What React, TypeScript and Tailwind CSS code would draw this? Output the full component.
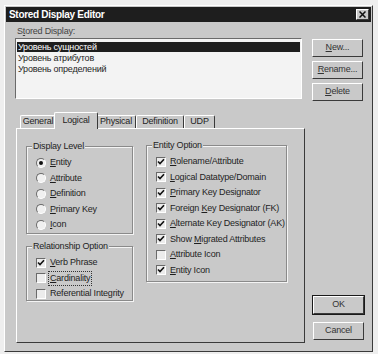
import { ReactNode } from "react";

const font = { fontFamily: '"Liberation Sans", Arial, sans-serif' };

const raised =
  "border border-t-white border-l-white border-r-[#3a3a3a] border-b-[#3a3a3a] bg-[#c9c9c9]";
const sunken =
  "border border-t-[#6a6a6a] border-l-[#6a6a6a] border-r-white border-b-white";

function Mn({ text, at }: { text: string; at: number }) {
  if (at < 0) return <>{text}</>;
  return (
    <>
      {text.slice(0, at)}
      <span className="underline underline-offset-1">{text[at]}</span>
      {text.slice(at + 1)}
    </>
  );
}

function Button({ children, strong }: { children: ReactNode; strong?: boolean }) {
  return (
    <div
      className={`w-[51px] h-[18px] flex items-center justify-center text-[#333] ${
        strong ? "outline outline-1 outline-[#1a1a1a]" : ""
      } ${raised}`}
    >
      {children}
    </div>
  );
}

function Radio({ label, at, checked }: { label: string; at: number; checked?: boolean }) {
  return (
    <div className="h-[15.5px] flex items-center gap-[4px] whitespace-nowrap">
      <span
        className={`w-[10px] h-[10px] shrink-0 rounded-full bg-[#f0f0f0] flex items-center justify-center ${sunken}`}
      >
        {checked && <span className="w-[4px] h-[4px] rounded-full bg-[#111]" />}
      </span>
      <span>
        <Mn text={label} at={at} />
      </span>
    </div>
  );
}

function Check({
  label,
  at,
  checked,
  focus,
}: {
  label: string;
  at: number;
  checked?: boolean;
  focus?: boolean;
}) {
  return (
    <div className="h-[15.5px] flex items-center gap-[4px] whitespace-nowrap">
      <span className={`w-[10px] h-[10px] shrink-0 bg-[#ececec] flex items-center justify-center ${sunken}`}>
        {checked && (
          <svg width="8" height="8" viewBox="0 0 8 8">
            <path d="M1 3.5 L3 5.5 L7 1.2" stroke="#111" strokeWidth="1.6" fill="none" />
          </svg>
        )}
      </span>
      <span className={focus ? "outline outline-1 outline-dotted outline-[#333] px-[1px] -mx-[1px]" : ""}>
        <Mn text={label} at={at} />
      </span>
    </div>
  );
}

function Group({ title, className, children }: { title: string; className: string; children: ReactNode }) {
  return (
    <fieldset
      className={`border border-[#8a8a8a] shadow-[inset_1px_1px_0_#f4f4f4,1px_1px_0_#f4f4f4] pl-[9px] ${className}`}
    >
      <legend className="-ml-[4px] px-[1px] bg-[#c9c9c9] leading-[10px] whitespace-nowrap">{title}</legend>
      {children}
    </fieldset>
  );
}

const tabs = ["General", "Logical", "Physical", "Definition", "UDP"];
const tabW = ["w-[36px]", "w-[44px]", "w-[40px]", "w-[48px]", "w-[31px]"];

const rows = ["Уровень сущностей", "Уровень атрибутов", "Уровень определений"];

export default function App() {
  return (
    <div
      style={font}
      className="w-[378px] h-[354px] bg-[#eeeeee] pt-[5px] pl-[4px] text-[9px] tracking-[-0.2px] text-[#1e1e1e]"
    >
      <div className={`w-[369px] h-[347px] flex flex-col ${raised}`}>
        {/* title bar */}
        <div className="mx-[1px] mt-[1px] h-[15px] bg-[#1e1e1e] flex items-center justify-between pl-[3px] pr-[2px]">
          <span className="text-white font-bold text-[10px] tracking-[-0.3px]">Stored Display Editor</span>
          <span className={`w-[13px] h-[11px] flex items-center justify-center ${raised}`}>
            <svg width="7" height="7" viewBox="0 0 7 7">
              <path d="M0.5 0.5 L6.5 6.5 M6.5 0.5 L0.5 6.5" stroke="#111" strokeWidth="1.5" />
            </svg>
          </span>
        </div>

        {/* stored display list */}
        <div className="pl-[12px] mt-[3px] h-[12px] leading-[12px] text-[#444]">
          <Mn text="Stored Display:" at={1} />
        </div>
        <div className="flex mt-[1px] pl-[10px]">
          <div className={`w-[287px] h-[61px] bg-[#f3f3f3] p-[1px] ${sunken}`}>
            {rows.map((r, i) => (
              <div
                key={r}
                className={`h-[10px] leading-[10px] px-[1px] ${
                  i === 0 ? "bg-[#1e1e1e] text-white mt-[2px]" : "mt-[1px]"
                }`}
              >
                {r}
              </div>
            ))}
          </div>
          <div className="ml-[10px] mt-[1px] flex flex-col gap-[4px]">
            <Button>
              <Mn text="New..." at={0} />
            </Button>
            <Button>
              <Mn text="Rename..." at={0} />
            </Button>
            <Button>
              <Mn text="Delete" at={0} />
            </Button>
          </div>
        </div>

        {/* tabs + panel */}
        <div className="flex items-end mt-[11px] pl-[11px]">
          <div className="flex flex-col">
            <div className="flex items-end h-[16px] pl-[4px] relative z-10">
              {tabs.map((t, i) => (
                <div
                  key={t}
                  className={`${tabW[i]} flex items-center justify-center rounded-t-[2px] border border-b-0 border-t-white border-l-white border-r-[#3a3a3a] bg-[#c9c9c9] ${
                    i === 1 ? "h-[17px] -mx-[2px] -mb-[1px] z-10" : "h-[13px]"
                  }`}
                >
                  {t}
                </div>
              ))}
            </div>
            <div className={`w-[289px] h-[215px] ${raised} flex pl-[9px] pt-[12px] gap-[13px]`}>
              <div className="w-[107px] flex flex-col gap-[7px]">
                <Group title="Display Level" className="h-[93px] pt-[4px]">
                  <Radio label="Entity" at={0} checked />
                  <Radio label="Attribute" at={0} />
                  <Radio label="Definition" at={0} />
                  <Radio label="Primary Key" at={0} />
                  <Radio label="Icon" at={0} />
                </Group>
                <Group title="Relationship Option" className="h-[60px] pt-[4px]">
                  <Check label="Verb Phrase" at={0} checked />
                  <Check label="Cardinality" at={0} focus />
                  <Check label="Referential Integrity" at={-1} />
                </Group>
              </div>
              <div className="w-[141px]">
                <Group title="Entity Option" className="h-[142px] pt-[4px] -mt-[1px]">
                  <Check label="Rolename/Attribute" at={0} checked />
                  <Check label="Logical Datatype/Domain" at={0} checked />
                  <Check label="Primary Key Designator" at={0} checked />
                  <Check label="Foreign Key Designator (FK)" at={8} checked />
                  <Check label="Alternate Key Designator (AK)" at={0} checked />
                  <Check label="Show Migrated Attributes" at={5} checked />
                  <Check label="Attribute Icon" at={0} />
                  <Check label="Entity Icon" at={0} checked />
                </Group>
              </div>
            </div>
          </div>
          <div className="ml-[8px] mb-[3px] flex flex-col gap-[8px]">
            <Button strong>OK</Button>
            <Button>Cancel</Button>
          </div>
        </div>
      </div>
    </div>
  );
}
